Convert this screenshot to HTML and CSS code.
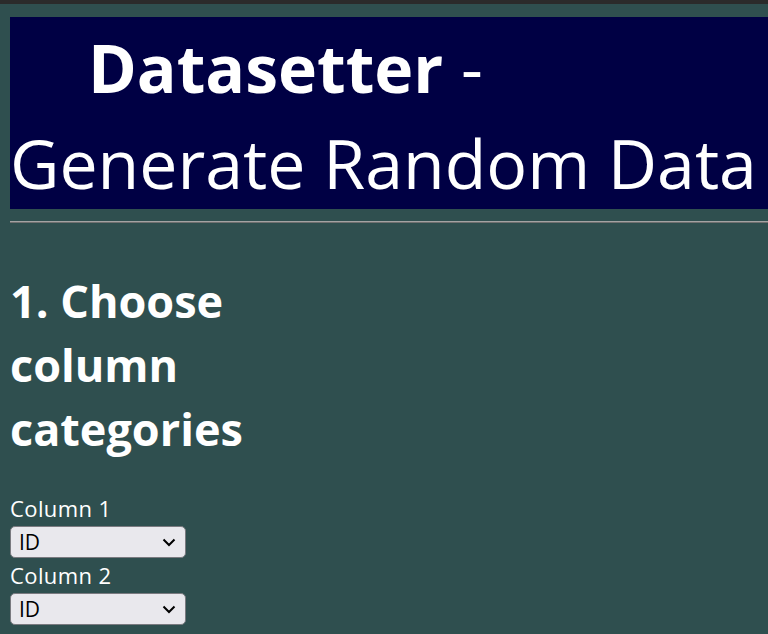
FILE: index.html
```html
<!DOCTYPE html>
<html lang="en">
<head>
<meta charset="utf-8">
<title>Datasetter - Generate Random Data</title>
<link rel="stylesheet" href="styles.css">
</head>
<body>
<div class="topbar"></div>
<main class="page">
  <header class="banner">
    <h1 class="title"><span class="title-line title-first"><strong>Datasetter</strong> -</span> <span class="title-line">Generate Random Data</span></h1>
  </header>
  <hr class="rule">
  <section class="step">
    <h2 class="step-title">1. Choose column categories</h2>
    <div class="field">
      <label class="field-label" for="c1">Column 1</label>
      <span class="select-wrap">
        <select id="c1" class="select"><option>ID</option></select>
        <svg class="chev" width="14" height="9" viewBox="0 0 14 9"><path d="M1.5 1.5 L7 7 L12.5 1.5" fill="none" stroke="#000" stroke-width="2"/></svg>
      </span>
    </div>
    <div class="field">
      <label class="field-label" for="c2">Column 2</label>
      <span class="select-wrap">
        <select id="c2" class="select"><option>ID</option></select>
        <svg class="chev" width="14" height="9" viewBox="0 0 14 9"><path d="M1.5 1.5 L7 7 L12.5 1.5" fill="none" stroke="#000" stroke-width="2"/></svg>
      </span>
    </div>
    <div class="field">
      <label class="field-label" for="c3">Column 3</label>
      <span class="select-wrap">
        <select id="c3" class="select"><option>ID</option></select>
        <svg class="chev" width="14" height="9" viewBox="0 0 14 9"><path d="M1.5 1.5 L7 7 L12.5 1.5" fill="none" stroke="#000" stroke-width="2"/></svg>
      </span>
    </div>
  </section>
</main>
</body>
</html>
```
FILE: styles.css
```css
html, body {
  margin: 0;
  padding: 0;
  background: #2f4f4f;
  overflow: hidden;
}
body {
  font-family: "Open Sans", "Noto Sans", sans-serif;
  color: #fff;
}
.topbar {
  height: 4px;
  background: #2b2b2b;
}
.page {
  padding: 13px 0 0 10px;
}
.banner {
  background: #000044;
  height: 192px;
}
.title {
  margin: 0;
  font-size: 68px;
  line-height: 96px;
  font-weight: 400;
  padding-top: 2px;
  white-space: nowrap;
}
.title-line {
  display: block;
}
.title-first {
  padding-left: 78px;
}
.title strong {
  font-weight: 700;
  font-size: 66px;
}
.rule {
  margin: 12px 0 0 0;
  border: 0;
  border-top: 1px solid #a3a3a3;
  border-bottom: 1px solid #707070;
  height: 0;
}
.step {
  padding-top: 46px;
}
.step-title {
  margin: 0 0 34px 0;
  font-size: 45px;
  line-height: 64px;
  font-weight: 700;
  width: 300px;
}
.field {
  display: flex;
  flex-direction: column;
  align-items: flex-start;
}
.field-label {
  font-size: 22px;
  line-height: 26px;
  letter-spacing: 0.4px;
}
.select-wrap {
  position: relative;
  display: block;
  margin: 5px 0 4px 0;
}
.select {
  appearance: none;
  -webkit-appearance: none;
  display: block;
  width: 176px;
  height: 32px;
  margin: 0;
  padding: 0 0 0 8px;
  background: #e9e8ed;
  border: 1px solid #7a7a80;
  border-radius: 5px;
  font-family: "Open Sans", "Noto Sans", sans-serif;
  font-size: 21px;
  color: #000;
}
.chev {
  position: absolute;
  right: 10px;
  top: 12px;
}
```
